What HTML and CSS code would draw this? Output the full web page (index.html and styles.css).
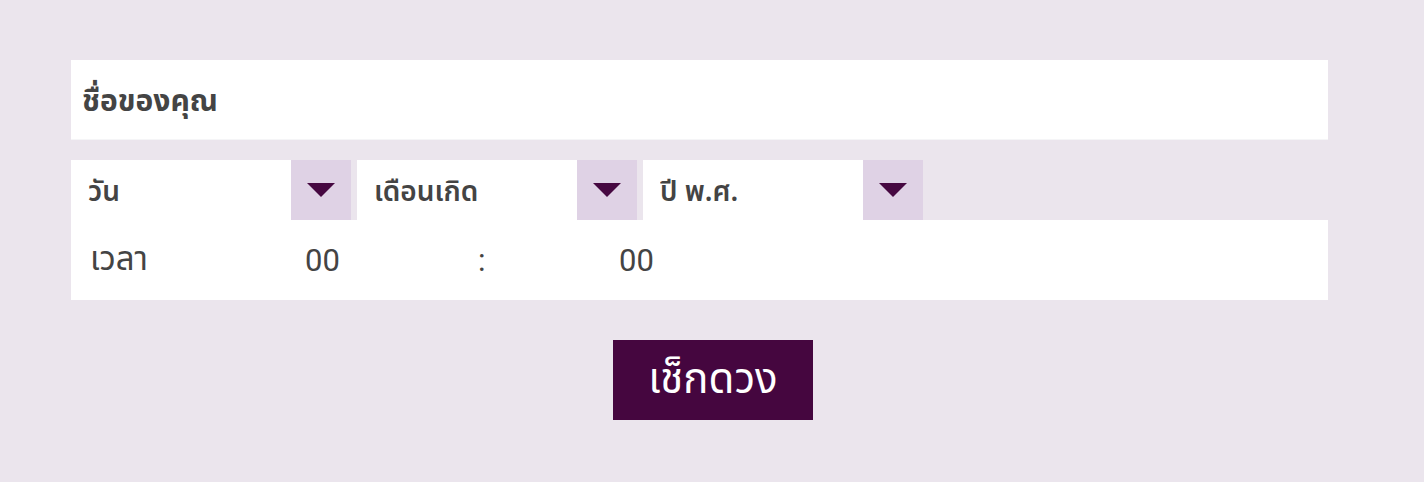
FILE: index.html
```html
<!DOCTYPE html>
<html lang="th">
<head>
    <meta charset="UTF-8">
    <meta name="viewport" content="width=device-width, initial-scale=1.0">
    <title>เช็กดวง</title>
    <link rel="stylesheet" href="styles.css">
</head>
<body>

    <form id="dudoungForm" class="form-dudoung">
        <div class="fields">
            <input type="text" class="input-name" id="name" name="name" placeholder="ชื่อของคุณ">

            <div class="birth-row">
                <div class="select-box">
                    <select id="day" name="day">
                        <option value="">วัน</option>
                    </select>
                    <span class="select-arrow"></span>
                </div>
                <div class="select-box">
                    <select id="month" name="month">
                        <option value="">เดือนเกิด</option>
                    </select>
                    <span class="select-arrow"></span>
                </div>
                <div class="select-box">
                    <select id="year" name="year">
                        <option value="">ปี พ.ศ.</option>
                    </select>
                    <span class="select-arrow"></span>
                </div>
            </div>

            <div class="time-row">
                <label for="hour" class="time-label">เวลา</label>
                <select id="hour" name="hour" class="time-select">
                    <option>00</option>
                </select>
                <span class="time-sep">:</span>
                <select id="minute" name="minute" class="time-select">
                    <option>00</option>
                </select>
            </div>
        </div>

        <div class="submit-wrap">
            <button type="button" class="btn-submit">เช็กดวง</button>
        </div>
    </form>

</body>
</html>
```

FILE: styles.css
```css
body {
    margin: 0;
    background-color: #ebe5ed;
    font-family: "Noto Sans", "Noto Sans Thai", Tahoma, sans-serif;
    color: #444;
}

.form-dudoung {
    padding-top: 60px;
}

.fields {
    width: 1257px;
    margin-left: 71px;
}

.input-name {
    display: block;
    width: 100%;
    height: 80px;
    box-sizing: border-box;
    border: none;
    border-bottom: 1px solid #f5f5f7;
    padding: 0 11px;
    font-family: inherit;
    font-size: 30px;
    font-weight: bold;
    color: #444;
    outline: none;
}

.input-name::placeholder {
    color: #444;
}

.birth-row {
    display: flex;
    gap: 6px;
    margin-top: 20px;
}

.select-box {
    display: flex;
    width: 280px;
    height: 60px;
    background-color: white;
}

.select-box select {
    flex: 1;
    min-width: 0;
    appearance: none;
    border: none;
    background: transparent;
    padding: 0 17px;
    font-family: inherit;
    font-size: 28px;
    font-weight: 600;
    color: #444;
    outline: none;
}

.select-arrow {
    width: 60px;
    display: flex;
    align-items: center;
    justify-content: center;
    background-color: #dfd2e5;
}

.select-arrow::after {
    content: "";
    border-left: 14px solid transparent;
    border-right: 14px solid transparent;
    border-top: 14px solid #460841;
}

.time-row {
    display: flex;
    align-items: center;
    height: 80px;
    background-color: white;
}

.time-label {
    width: 234px;
    box-sizing: border-box;
    padding-left: 19px;
    font-size: 33px;
}

.time-select {
    width: 173px;
    appearance: none;
    border: none;
    background: transparent;
    padding: 0;
    font-family: Roboto, sans-serif;
    font-size: 31px;
    color: #444;
    outline: none;
}

.time-sep {
    width: 141px;
    font-family: Roboto, sans-serif;
    font-size: 31px;
}

.submit-wrap {
    display: flex;
    justify-content: center;
    margin-top: 40px;
    padding-left: 2px;
}

.btn-submit {
    width: 200px;
    height: 80px;
    border: none;
    background-color: #45063f;
    color: white;
    font-family: inherit;
    font-size: 42px;
    cursor: pointer;
}
```
